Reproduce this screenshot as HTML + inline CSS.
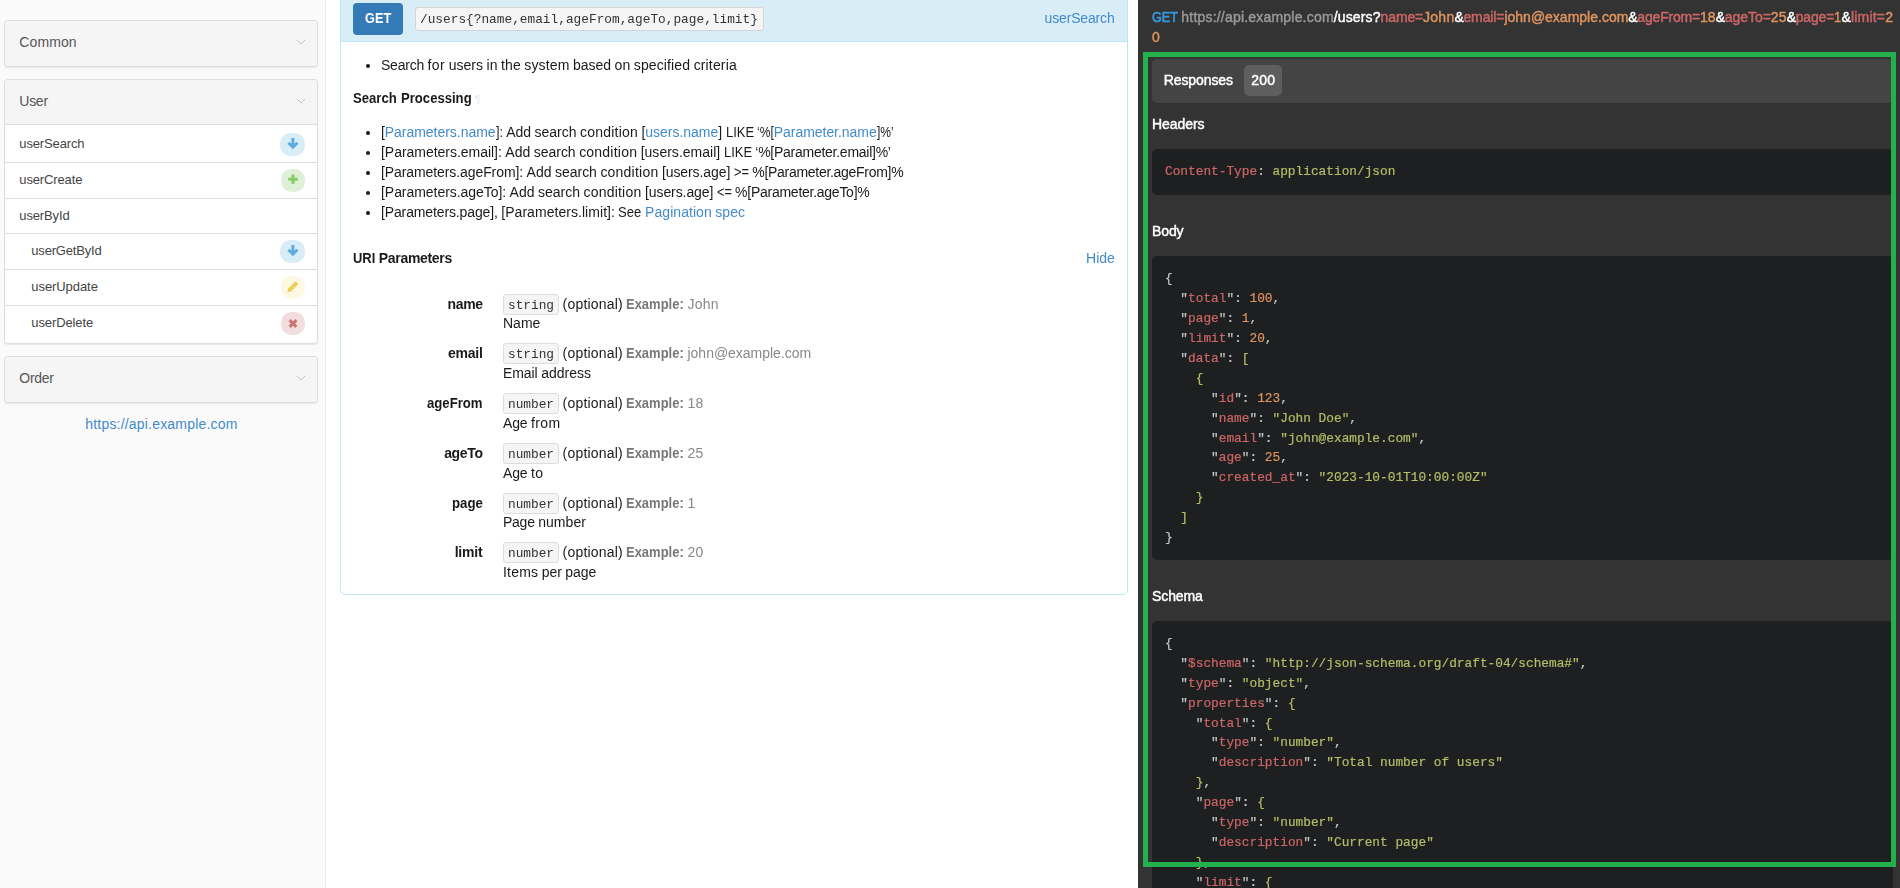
<!DOCTYPE html>
<html lang="en">
<head>
<meta charset="utf-8">
<title>API Documentation</title>
<style>
*{box-sizing:border-box}
html,body{margin:0;padding:0}
body{width:1900px;height:888px;overflow:hidden;background:#fff;color:#1a1a1a;
 font-family:"Liberation Sans",sans-serif;font-size:14px;line-height:20px;position:relative}
a{color:#428bca;text-decoration:none}
.mono{font-family:"Liberation Mono",monospace}
.t{position:absolute;white-space:pre;word-spacing:-0.03em}
.b{font-weight:bold}

/* ---------- left nav ---------- */
#nav{position:absolute;left:0;top:0;width:326px;height:888px;background:#fafafa;border-right:1px solid #eee}
.panel{position:absolute;left:4px;width:314px;border:1px solid #ddd;border-radius:4px;background:#fff;
 box-shadow:0 1px 1px rgba(0,0,0,.08);overflow:hidden}
.panel .head{position:absolute;left:0;top:0;width:312px;height:45px;background:#f5f5f5;color:#555}
.panel .head svg{position:absolute;right:11px;top:18px}
.item{position:absolute;left:0;width:312px;border-top:1px solid #ddd;background:#fff;color:#444;font-size:13px}
.badge{position:absolute;right:12px;width:25px;height:23px;border-radius:10.5px}
.badge svg{position:absolute;left:0;top:0}

/* ---------- middle ---------- */
#action{will-change:transform;position:absolute;left:340px;top:-8px;width:788px;height:603px;border:1px solid #bce8f1;border-radius:5px;background:#fff}
#ahead{position:absolute;left:0;top:0;width:786px;height:49px;background:#d9edf7;border-bottom:1px solid #bce8f1}
#get{position:absolute;left:12px;top:10px;width:50px;height:32px;background:#337ab7;color:#fff;border-radius:4px;font-weight:bold}
#uri{position:absolute;left:74px;top:14px;height:24px;width:349px;background:#f5f5f5;border:1px solid #d4d4d4;border-radius:3px;color:#333;font-size:12.8px;line-height:23px;padding-left:4px;white-space:nowrap}
.dot{position:absolute;width:4.6px;height:4.6px;border-radius:50%;background:#1a1a1a}
.pil{color:#e4eef7;font-size:11px}
.ty{position:absolute;width:56px;height:21px;padding-top:0.5px;border:1px solid #ddd;border-radius:3px;background:#f5f5f5;color:#333;font-size:12.8px;line-height:19px;text-align:center}
.ex{color:#888}
.exb{color:#777}

/* ---------- right ---------- */
#right{will-change:transform;position:absolute;left:1138px;top:0;width:762px;height:888px;background:#333;color:#fff;overflow:hidden}
.med{-webkit-text-stroke-width:0.45px}
.med .get{-webkit-text-stroke-width:0.7px}
.get{color:#3498db}
.host{color:#999}
.path{color:#fff}
.pk{color:#cc6666}
.pv{color:#de935f}
#tabs{position:absolute;left:14px;top:59px;width:741px;height:44px;background:#444;border-radius:5px}
#b200{position:absolute;left:92px;top:6px;width:38px;height:31px;border-radius:5px;background:#5e5e5e}
.code{position:absolute;left:14px;width:741px;margin:0;background:#1d1f21;border-radius:5px;color:#c5c8c6;font-size:12.8px;line-height:19.9px;padding:13.3px 13px 0;overflow:hidden;-webkit-text-stroke-width:0.2px}
.k{color:#cc6666}
.s{color:#b5bd68}
.n{color:#de935f}
#green{position:absolute;left:5px;top:52px;width:753px;height:815px;border:5px solid #22b14c}

/* fitted letter-spacing (per word) */
#w1{letter-spacing:0.10px}
#w2{letter-spacing:-0.27px}
#w3{letter-spacing:-0.14px}
#w4{letter-spacing:-0.13px}
#w5{letter-spacing:-0.13px}
#w6{letter-spacing:-0.18px}
#w7{letter-spacing:-0.07px}
#w8{letter-spacing:-0.11px}
#w9{letter-spacing:-0.30px}
#w10{letter-spacing:0.19px}
#w11{display:inline-block;width:26.23px;transform:scaleX(0.9115);transform-origin:0 0}
#w12{letter-spacing:-0.15px}
#w13{letter-spacing:-0.22px}
#w14{letter-spacing:0.42px}
#w15{letter-spacing:0.02px}
#w16{letter-spacing:0.12px}
#w17{letter-spacing:0.08px}
#w18{letter-spacing:0.17px}
#w19{letter-spacing:-0.03px}
#w20{letter-spacing:0.07px}
#w21{letter-spacing:0.12px}
#w22{letter-spacing:0.15px}
#w23{display:inline-block;width:43.81px;transform:scaleX(0.9381);transform-origin:0 0}
#w24{display:inline-block;width:70.64px;transform:scaleX(0.9358);transform-origin:0 0}
#w25{letter-spacing:-0.17px}
#w26{letter-spacing:-0.03px}
#w27{display:inline-block;width:7.11px;transform:scaleX(0.9137);transform-origin:0 0}
#w28{letter-spacing:0.01px}
#w29{letter-spacing:-0.02px}
#w30{letter-spacing:0.22px}
#w31{letter-spacing:-0.17px}
#w32{letter-spacing:-0.01px}
#w33{letter-spacing:-0.17px}
#w34{display:inline-block;width:28.09px;transform:scaleX(0.9254);transform-origin:0 0}
#w35{display:inline-block;width:16.78px;transform:scaleX(0.8627);transform-origin:0 0}
#w36{letter-spacing:-0.05px}
#w37{display:inline-block;width:16.78px;transform:scaleX(0.8627);transform-origin:0 0}
#w38{letter-spacing:-0.03px}
#w39{letter-spacing:0.01px}
#w40{letter-spacing:-0.02px}
#w41{letter-spacing:0.22px}
#w42{letter-spacing:0.02px}
#w43{display:inline-block;width:28.09px;transform:scaleX(0.9254);transform-origin:0 0}
#w44{letter-spacing:-0.26px}
#w45{letter-spacing:-0.09px}
#w46{letter-spacing:0.01px}
#w47{letter-spacing:-0.02px}
#w48{letter-spacing:0.22px}
#w49{letter-spacing:-0.08px}
#w50{display:inline-block;width:15.02px;transform:scaleX(0.9179);transform-origin:0 0}
#w51{letter-spacing:-0.29px}
#w52{letter-spacing:-0.05px}
#w53{letter-spacing:0.01px}
#w54{letter-spacing:-0.02px}
#w55{letter-spacing:0.22px}
#w56{letter-spacing:-0.08px}
#w57{display:inline-block;width:14.81px;transform:scaleX(0.9054);transform-origin:0 0}
#w58{letter-spacing:-0.26px}
#w59{letter-spacing:-0.13px}
#w60{letter-spacing:0.05px}
#w61{display:inline-block;width:23.17px;transform:scaleX(0.9298);transform-origin:0 0}
#w62{letter-spacing:0.05px}
#w63{letter-spacing:0.07px}
#w64{display:inline-block;width:22.30px;transform:scaleX(0.9242);transform-origin:0 0}
#w65{letter-spacing:-0.31px}
#w66{letter-spacing:-0.02px}
#w67{letter-spacing:-0.39px}
#w68{letter-spacing:0.19px}
#w69{display:inline-block;width:57.70px;transform:scaleX(0.9270);transform-origin:0 0}
#w70{letter-spacing:0.20px}
#w71{letter-spacing:-0.01px}
#w72{letter-spacing:-0.24px}
#w73{letter-spacing:0.19px}
#w74{display:inline-block;width:57.70px;transform:scaleX(0.9270);transform-origin:0 0}
#w75{letter-spacing:-0.02px}
#w76{letter-spacing:-0.07px}
#w77{letter-spacing:0.01px}
#w78{display:inline-block;width:55.52px;transform:scaleX(0.9390);transform-origin:0 0}
#w79{letter-spacing:0.19px}
#w80{display:inline-block;width:57.70px;transform:scaleX(0.9270);transform-origin:0 0}
#w81{letter-spacing:0.09px}
#w82{letter-spacing:-0.17px}
#w83{letter-spacing:0.44px}
#w84{letter-spacing:-0.35px}
#w85{letter-spacing:0.19px}
#w86{display:inline-block;width:57.70px;transform:scaleX(0.9270);transform-origin:0 0}
#w87{letter-spacing:0.09px}
#w88{letter-spacing:-0.17px}
#w89{letter-spacing:0.38px}
#w90{display:inline-block;width:30.94px;transform:scaleX(0.9465);transform-origin:0 0}
#w91{letter-spacing:0.19px}
#w92{display:inline-block;width:57.70px;transform:scaleX(0.9270);transform-origin:0 0}
#w93{letter-spacing:0.08px}
#w94{letter-spacing:-0.26px}
#w95{letter-spacing:0.05px}
#w96{letter-spacing:-0.16px}
#w97{letter-spacing:0.19px}
#w98{display:inline-block;width:57.70px;transform:scaleX(0.9270);transform-origin:0 0}
#w99{letter-spacing:0.09px}
#w100{letter-spacing:0.22px}
#w101{letter-spacing:-0.07px}
#w102{letter-spacing:-0.10px}
#w103{display:inline-block;width:25.83px;transform:scaleX(0.9053);transform-origin:0 0}
#w104{letter-spacing:0.20px}
#w105{letter-spacing:0.13px}
#w106{letter-spacing:-0.14px}
#w107{letter-spacing:0.24px}
#w108{letter-spacing:-0.34px}
#w109{letter-spacing:-0.11px}
#w111{letter-spacing:-0.34px}
#w112{letter-spacing:-0.19px}
#w113{letter-spacing:0.01px}
#w114{letter-spacing:-0.34px}
#w115{letter-spacing:-0.02px}
#w116{letter-spacing:0.11px}
#w117{letter-spacing:-0.34px}
#w118{letter-spacing:-0.13px}
#w119{display:inline-block;width:7.20px;transform:scaleX(0.9234);transform-origin:0 0}
#w120{letter-spacing:0.06px}
#w121{letter-spacing:0.21px}
#w122{letter-spacing:0.30px}
#w123{letter-spacing:0.17px}
#w124{letter-spacing:-0.11px}
#w125{letter-spacing:0.17px}
#w126{letter-spacing:-0.06px}
#w127{letter-spacing:-0.10px}
#w128{letter-spacing:-0.09px}
</style>
</head>
<body>
<div id="nav">
<div class="panel" style="top:20px;height:47px">
<div class="head"><div class="t" style="left:14.3px;top:11px"><span id="w1">Common</span></div><svg width="10" height="6" viewBox="0 0 10 6"><path d="M1 1 L5 5 L9 1" fill="none" stroke="#c4c4c4" stroke-width="1"/></svg></div>
</div>
<div class="panel" style="top:79px;height:265px">
<div class="head"><div class="t" style="left:14.3px;top:11px"><span id="w2">User</span></div><svg width="10" height="6" viewBox="0 0 10 6"><path d="M1 1 L5 5 L9 1" fill="none" stroke="#c4c4c4" stroke-width="1"/></svg></div>
<div class="item" style="top:44px;height:38px"><div class="t" style="left:14.3px;top:9px"><span id="w3">userSearch</span></div><span class="badge" style="background:#d9edf7;top:8px;width:25px"><svg width="25" height="23" viewBox="0 0 25 23"><path d="M12.9 5.1 V13.6 M8.4 9.7 L12.9 14.2 L17.4 9.7" fill="none" stroke="#5badde" stroke-width="2.9" stroke-linejoin="miter"/></svg></span></div>
<div class="item" style="top:82px;height:36px"><div class="t" style="left:14.3px;top:7px"><span id="w4">userCreate</span></div><span class="badge" style="background:#dff0d8;top:6px;width:24px"><svg width="24" height="23" viewBox="0 0 24 23"><path d="M12 5.6 V14.8 M7.2 10.2 H16.8" fill="none" stroke="#8cc868" stroke-width="3.1"/></svg></span></div>
<div class="item" style="top:118px;height:35px"><div class="t" style="left:14.3px;top:7px"><span id="w5">userById</span></div></div>
<div class="item" style="top:153px;height:36px"><div class="t" style="left:26.3px;top:7px"><span id="w6">userGetById</span></div><span class="badge" style="background:#d9edf7;top:6px;width:25px"><svg width="25" height="23" viewBox="0 0 25 23"><path d="M12.9 5.1 V13.6 M8.4 9.7 L12.9 14.2 L17.4 9.7" fill="none" stroke="#5badde" stroke-width="2.9" stroke-linejoin="miter"/></svg></span></div>
<div class="item" style="top:189px;height:36px"><div class="t" style="left:26.3px;top:7px"><span id="w7">userUpdate</span></div><span class="badge" style="background:#fcf8e3;top:6px;width:24px"><svg width="24" height="23" viewBox="0 0 24 23"><path d="M6.4 16.2 L7 12.6 L13.8 5.8 Q14.6 5.2 15.3 5.8 L16.9 7.4 Q17.5 8.1 16.8 8.8 L10 15.6 Z" fill="#ecd25a"/></svg></span></div>
<div class="item" style="top:225px;height:38px"><div class="t" style="left:26.3px;top:7px"><span id="w8">userDelete</span></div><span class="badge" style="background:#f2dede;top:6px;width:24px"><svg width="24" height="23" viewBox="0 0 24 23"><path d="M8.6 8.1 L15.4 14.9 M15.4 8.1 L8.6 14.9" fill="none" stroke="#cf7272" stroke-width="3"/></svg></span></div>
</div>
<div class="panel" style="top:356px;height:47px">
<div class="head"><div class="t" style="left:14.3px;top:11px"><span id="w9">Order</span></div><svg width="10" height="6" viewBox="0 0 10 6"><path d="M1 1 L5 5 L9 1" fill="none" stroke="#c4c4c4" stroke-width="1"/></svg></div>
</div>
<a class="t" style="left:85.3px;top:414px"><span id="w10">https://api.example.com</span></a>
</div>
<div id="action">
<div id="ahead"><div id="get"><div class="t" style="left:11.9px;top:5.25px"><span id="w11">GET</span></div></div><div id="uri" class="mono">/users{?name,email,ageFrom,ageTo,page,limit}</div><a class="t" style="right:12.4px;top:15px"><span id="w12">userSearch</span></a></div>
<i class="dot" style="left:24.6px;top:70.7px"></i>
<div class="t" style="left:40px;top:62px"><span id="w13">Search</span> <span id="w14">for</span> <span id="w15">users</span> <span id="w16">in</span> <span id="w17">the</span> <span id="w18">system</span> <span id="w19">based</span> <span id="w20">on</span> <span id="w21">specified</span> <span id="w22">criteria</span></div>
<div class="t" style="left:12.3px;top:95px"><span class="b"><span id="w23">Search</span> <span id="w24">Processing</span> </span><span class="pil">¶</span></div>
<i class="dot" style="left:24.6px;top:137.7px"></i>
<i class="dot" style="left:24.6px;top:157.7px"></i>
<i class="dot" style="left:24.6px;top:177.7px"></i>
<i class="dot" style="left:24.6px;top:197.7px"></i>
<i class="dot" style="left:24.6px;top:217.7px"></i>
<div class="t" style="left:40px;top:129px"><span id="w25">[</span><a><span id="w26">Parameters.name</span></a><span id="w27">]:</span> <span id="w28">Add</span> <span id="w29">search</span> <span id="w30">condition</span> <span id="w31">[</span><a><span id="w32">users.name</span></a><span id="w33">]</span> <span id="w34">LIKE</span> <span id="w35">‘%[</span><a><span id="w36">Parameter.name</span></a><span id="w37">]%’</span></div>
<div class="t" style="left:40px;top:149px"><span id="w38">[Parameters.email]:</span> <span id="w39">Add</span> <span id="w40">search</span> <span id="w41">condition</span> <span id="w42">[users.email]</span> <span id="w43">LIKE</span> <span id="w44">‘%[Parameter.email]%’</span></div>
<div class="t" style="left:40px;top:169px"><span id="w45">[Parameters.ageFrom]:</span> <span id="w46">Add</span> <span id="w47">search</span> <span id="w48">condition</span> <span id="w49">[users.age]</span> <span id="w50">&gt;=</span> <span id="w51">%[Parameter.ageFrom]%</span></div>
<div class="t" style="left:40px;top:189px"><span id="w52">[Parameters.ageTo]:</span> <span id="w53">Add</span> <span id="w54">search</span> <span id="w55">condition</span> <span id="w56">[users.age]</span> <span id="w57">&lt;=</span> <span id="w58">%[Parameter.ageTo]%</span></div>
<div class="t" style="left:40px;top:209px"><span id="w59">[Parameters.page],</span> <span id="w60">[Parameters.limit]:</span> <span id="w61">See</span> <a><span id="w62">Pagination</span> <span id="w63">spec</span></a></div>
<div class="t" style="left:12px;top:255px"><span class="b"><span id="w64">URI</span> <span id="w65">Parameters</span></span></div>
<a class="t" style="right:12.2px;top:255px"><span id="w66">Hide</span></a>
<div class="t" style="right:644.4px;top:301px"><span class="b"><span id="w67">name</span></span></div>
<span class="ty mono" style="left:162px;top:301px">string</span>
<div class="t" style="left:221.6px;top:301px"><span id="w68">(optional)</span> <span class="b exb"><span id="w69">Example:</span> </span><span class="ex"><span id="w70">John</span></span></div>
<div class="t" style="left:162px;top:320.4px"><span id="w71">Name</span></div>
<div class="t" style="right:644.4px;top:350px"><span class="b"><span id="w72">email</span></span></div>
<span class="ty mono" style="left:162px;top:350px">string</span>
<div class="t" style="left:221.6px;top:350px"><span id="w73">(optional)</span> <span class="b exb"><span id="w74">Example:</span> </span><span class="ex"><span id="w75">john@example.com</span></span></div>
<div class="t" style="left:162px;top:370px"><span id="w76">Email</span> <span id="w77">address</span></div>
<div class="t" style="right:644.4px;top:400.2px"><span class="b"><span id="w78">ageFrom</span></span></div>
<span class="ty mono" style="left:162px;top:400px">number</span>
<div class="t" style="left:221.6px;top:400.2px"><span id="w79">(optional)</span> <span class="b exb"><span id="w80">Example:</span> </span><span class="ex"><span id="w81">18</span></span></div>
<div class="t" style="left:162px;top:419.6px"><span id="w82">Age</span> <span id="w83">from</span></div>
<div class="t" style="right:644.4px;top:449.8px"><span class="b"><span id="w84">ageTo</span></span></div>
<span class="ty mono" style="left:162px;top:450px">number</span>
<div class="t" style="left:221.6px;top:449.8px"><span id="w85">(optional)</span> <span class="b exb"><span id="w86">Example:</span> </span><span class="ex"><span id="w87">25</span></span></div>
<div class="t" style="left:162px;top:470.2px"><span id="w88">Age</span> <span id="w89">to</span></div>
<div class="t" style="right:644.4px;top:500.2px"><span class="b"><span id="w90">page</span></span></div>
<span class="ty mono" style="left:162px;top:500px">number</span>
<div class="t" style="left:221.6px;top:500.2px"><span id="w91">(optional)</span> <span class="b exb"><span id="w92">Example:</span> </span><span class="ex"><span id="w93">1</span></span></div>
<div class="t" style="left:162px;top:518.8px"><span id="w94">Page</span> <span id="w95">number</span></div>
<div class="t" style="right:644.4px;top:549px"><span class="b"><span id="w96">limit</span></span></div>
<span class="ty mono" style="left:162px;top:549px">number</span>
<div class="t" style="left:221.6px;top:549px"><span id="w97">(optional)</span> <span class="b exb"><span id="w98">Example:</span> </span><span class="ex"><span id="w99">20</span></span></div>
<div class="t" style="left:162px;top:569.3px"><span id="w100">Items</span> <span id="w101">per</span> <span id="w102">page</span></div>
</div>
<div id="right">
<div class="t med" style="left:14px;top:7px"><span class="get"><span id="w103">GET</span> </span><span class="host"><span id="w104">https://api.example.com</span></span><span class="path"><span id="w105">/users?</span></span><span class="pk"><span id="w106">name=</span></span><span class="pv"><span id="w107">John</span></span><span class="amp"><span id="w108">&amp;</span></span><span class="pk"><span id="w109">email=</span></span><span class="pv"><span id="w110">john@example.com</span></span><span class="amp"><span id="w111">&amp;</span></span><span class="pk"><span id="w112">ageFrom=</span></span><span class="pv"><span id="w113">18</span></span><span class="amp"><span id="w114">&amp;</span></span><span class="pk"><span id="w115">ageTo=</span></span><span class="pv"><span id="w116">25</span></span><span class="amp"><span id="w117">&amp;</span></span><span class="pk"><span id="w118">page=</span></span><span class="pv"><span id="w119">1</span></span><span class="amp"><span id="w120">&amp;</span></span><span class="pk"><span id="w121">limit=</span></span><span class="pv"><span id="w122">2</span></span></div>
<div class="t med" style="left:14px;top:27px"><span class="pv"><span id="w123">0</span></span></div>
<div id="tabs"><div class="t med" style="left:11.8px;top:11px"><span id="w124">Responses</span></div><div id="b200"><div class="t med" style="left:7.3px;top:5px"><span id="w125">200</span></div></div></div>
<div class="t med" style="left:14px;top:114px"><span id="w126">Headers</span></div>
<pre class="code mono" style="top:149px;height:46px"><span class="k">Content-Type</span>: <span class="s">application/json</span></pre>
<div class="t med" style="left:14px;top:221px"><span id="w127">Body</span></div>
<pre class="code mono" style="top:256px;height:304px">{
  "<span class="k">total</span>": <span class="n">100</span>,
  "<span class="k">page</span>": <span class="n">1</span>,
  "<span class="k">limit</span>": <span class="n">20</span>,
  "<span class="k">data</span>": <span class="s">[</span>
    <span class="s">{</span>
      "<span class="k">id</span>": <span class="n">123</span>,
      "<span class="k">name</span>": <span class="s">"John Doe"</span>,
      "<span class="k">email</span>": <span class="s">"john@example.com"</span>,
      "<span class="k">age</span>": <span class="n">25</span>,
      "<span class="k">created_at</span>": <span class="s">"2023-10-01T10:00:00Z"</span>
    <span class="s">}</span>
  <span class="s">]</span>
}</pre>
<div class="t med" style="left:14px;top:586px"><span id="w128">Schema</span></div>
<pre class="code mono" style="top:621px;height:400px;padding-top:12.9px">{
  "<span class="k">$schema</span>": <span class="s">"http://json-schema.org/draft-04/schema#"</span>,
  "<span class="k">type</span>": <span class="s">"object"</span>,
  "<span class="k">properties</span>": <span class="s">{</span>
    "<span class="k">total</span>": <span class="s">{</span>
      "<span class="k">type</span>": <span class="s">"number"</span>,
      "<span class="k">description</span>": <span class="s">"Total number of users"</span>
    <span class="s">}</span>,
    "<span class="k">page</span>": <span class="s">{</span>
      "<span class="k">type</span>": <span class="s">"number"</span>,
      "<span class="k">description</span>": <span class="s">"Current page"</span>
    <span class="s">}</span>,
    "<span class="k">limit</span>": <span class="s">{</span>
      "<span class="k">type</span>": <span class="s">"number"</span>,
      "<span class="k">description</span>": <span class="s">"Items per page"</span>
    <span class="s">}</span>,</pre>
<div id="green"></div>
</div>
</body>
</html>
